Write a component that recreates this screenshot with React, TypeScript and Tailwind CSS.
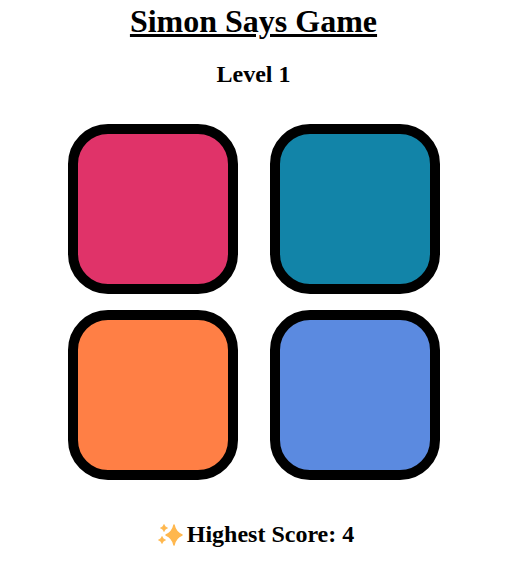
import React from 'react';

const pads = ['bg-[#e03369]', 'bg-[#1284a8]', 'bg-[#ff7f45]', 'bg-[#5b8ae0]'];

const Sparkles = () => (
  <svg width="26" height="26" viewBox="0 0 26 26" className="shrink-0" aria-hidden="true">
    <path d="M17 3 Q18.6 10.4 25 13 Q18.6 15.6 17 23 Q15.4 15.6 9 13 Q15.4 10.4 17 3Z" fill="#ffb74d" stroke="#ffb74d" strokeWidth="1.4" strokeLinejoin="round" />
    <path d="M7 2.5 Q7.8 5.2 10.5 6 Q7.8 6.8 7 9.5 Q6.2 6.8 3.5 6 Q6.2 5.2 7 2.5Z" fill="#ffb74d" stroke="#ffb74d" strokeWidth="0.8" strokeLinejoin="round" />
    <path d="M5 14.5 Q5.8 17.2 8.5 18 Q5.8 18.8 5 21.5 Q4.2 18.8 1.5 18 Q4.2 17.2 5 14.5Z" fill="#ffb74d" stroke="#ffb74d" strokeWidth="0.8" strokeLinejoin="round" />
  </svg>
);

const App: React.FC = () => {
  return (
    <div className="w-[513px] h-[587px] bg-white text-black text-center overflow-hidden font-['Liberation_Serif',serif]">
      <h1 className="w-[507px] pt-[3px] text-[32px] leading-[37px] font-bold underline">Simon Says Game</h1>
      <h2 className="w-[507px] mt-[21px] text-[24px] leading-[27px] font-bold">Level 1</h2>

      <div className="mt-[36px] ml-[68px] w-[372px] grid grid-cols-2 gap-x-[32px] gap-y-[16px]">
        {pads.map((color) => (
          <div key={color} className={`w-[170px] h-[170px] border-[10px] border-black rounded-[40px] ${color}`} />
        ))}
      </div>

      <h3 className="w-[511px] mt-[41px] flex items-center justify-center text-[24px] leading-[27px] font-bold">
        <Sparkles />
        <span className="ml-[4px]">Highest Score: 4</span>
      </h3>
    </div>
  );
};

export default App;
